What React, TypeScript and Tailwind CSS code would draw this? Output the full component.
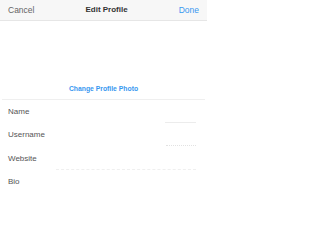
import React from 'react';

const rows = [
  { label: 'Name', line: 'ml-auto w-[31px] border-b border-[#ececec]' },
  { label: 'Username', line: 'ml-auto w-[30px] border-b border-dotted border-[#e2e2e2]' },
  { label: 'Website', line: 'ml-auto w-[140px] border-b border-dashed border-[#efefef]' },
  { label: 'Bio', line: '' },
];

export default function App() {
  return (
    <div className="w-[207px] h-[210px] bg-white overflow-hidden" style={{ fontFamily: '"Liberation Sans", Arial, sans-serif' }}>
      <header className="h-[21px] bg-[#f7f7f7] border-b border-[#e6e6e6] flex items-center justify-between px-2 text-[8.5px]">
        <span className="text-[#666]">Cancel</span>
        <span className="font-bold text-[#333] text-[8px]">Edit Profile</span>
        <span className="text-[#3897f0]">Done</span>
      </header>

      <div className="h-[79px] mx-[2px] border-b border-[#efefef] flex items-end justify-center pb-[5px]">
        <span className="text-[6.8px] font-bold text-[#3897f0]">Change Profile Photo</span>
      </div>

      <div className="pl-2 pr-[11px]">
        {rows.map((r) => (
          <div key={r.label} className="h-[23.5px] flex items-center">
            <span className="text-[8px] text-[#555]">{r.label}</span>
            {r.line && <div className={`${r.line} self-end mb-[1px]`} />}
          </div>
        ))}
      </div>
    </div>
  );
}
